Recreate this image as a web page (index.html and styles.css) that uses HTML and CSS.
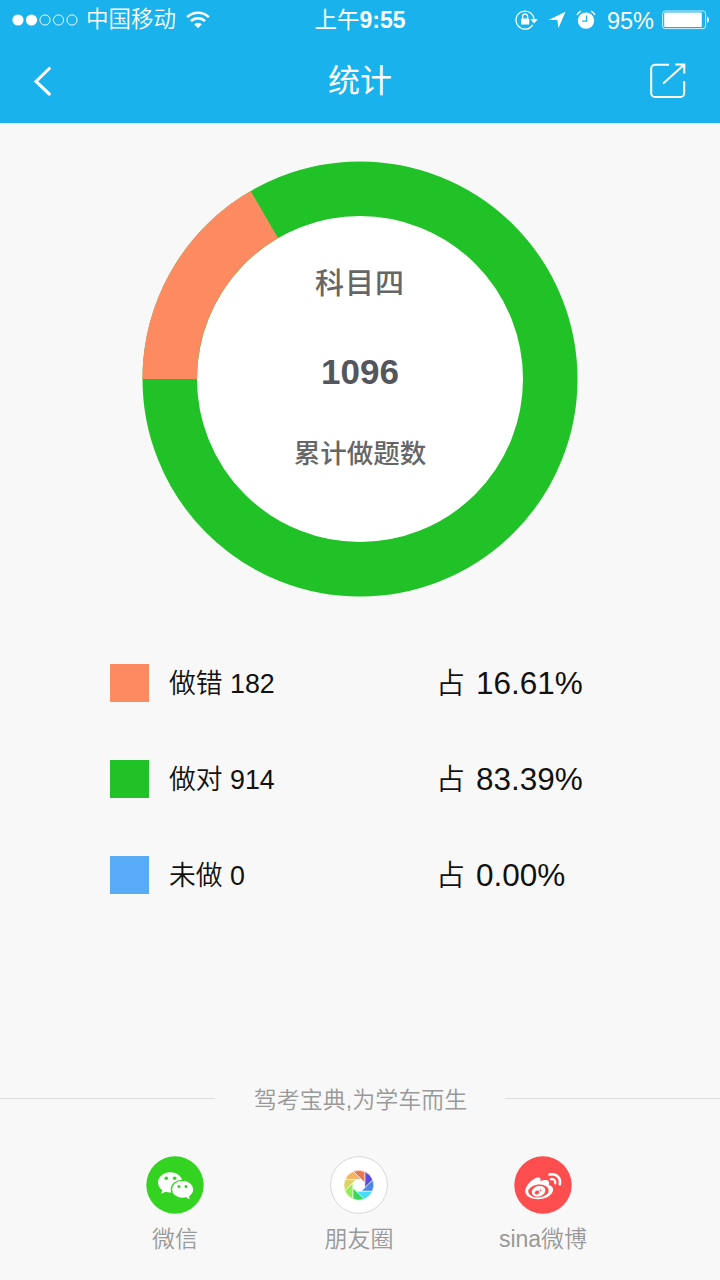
FILE: index.html
```
<!DOCTYPE html>
<html lang="zh-CN">
<head>
    <meta charset="UTF-8">
    <meta name="viewport" content="width=device-width, initial-scale=1.0">
    <title>统计</title>
    <link rel="stylesheet" href="styles.css">
</head>
<body>
    <header class="header">
        <div class="status-bar">
            <div class="status-left">
                <svg class="signal" width="66" height="12" viewBox="0 0 66 12">
                    <g fill="#fff">
                        <circle cx="6" cy="6" r="5.6"/>
                        <circle cx="19.5" cy="6" r="5.6"/>
                    </g>
                    <g fill="none" stroke="#fff" stroke-width="0.9">
                        <circle cx="33" cy="6" r="5.1"/>
                        <circle cx="46.5" cy="6" r="5.1"/>
                        <circle cx="60" cy="6" r="5.1"/>
                    </g>
                </svg>
                <span class="carrier">中国移动</span>
                <svg class="wifi" width="24" height="18" viewBox="0 0 24 18">
                    <g fill="none" stroke="#fff" stroke-width="2.5">
                        <path d="M1.2 6.1a15.4 15.4 0 0 1 21.6 0"/>
                        <path d="M5 10.2a10 10 0 0 1 14 0"/>
                    </g>
                    <path d="M8.2 13.3a5.4 5.4 0 0 1 7.6 0L12 17.2z" fill="#fff"/>
                </svg>
            </div>
            <div class="status-time">上午<b>9:55</b></div>
            <div class="status-right">
                <svg class="lock" width="24" height="20" viewBox="0 0 24 20">
                    <path d="M17.7 14.8A9 9 0 1 1 19 9.6" fill="none" stroke="#fff" stroke-width="1.3"/>
                    <path d="M15.4 9.2h7.4l-3.7 4.2z" fill="#fff"/>
                    <rect x="6" y="8.6" width="8.2" height="6" rx="0.6" fill="#fff"/>
                    <path d="M7.6 9V6.5a2.5 2.5 0 0 1 5 0V9" fill="none" stroke="#fff" stroke-width="1.3"/>
                </svg>
                <svg class="arrow" width="18" height="18" viewBox="0 0 18 18">
                    <path d="M17.5 0.8L10.4 17.3L9.4 8.9H0.5z" fill="#fff"/>
                </svg>
                <svg class="alarm" width="20" height="20" viewBox="0 0 20 20">
                    <circle cx="10" cy="10.6" r="8.2" fill="#fff"/>
                    <path d="M1 5a8 8 0 0 1 4-3.9M19 5a8 8 0 0 0-4-3.9" fill="none" stroke="#fff" stroke-width="1.4"/>
                    <path d="M10.6 5.4v5.8H6.2" fill="none" stroke="#19b2ed" stroke-width="1.2"/>
                </svg>
                <span class="battery-text">95%</span>
                <svg class="battery" width="48" height="20" viewBox="0 0 48 20">
                    <rect x="0.6" y="1" width="43" height="17.6" rx="2.6" fill="none" stroke="#fff" stroke-opacity="0.8" stroke-width="1"/>
                    <rect x="2.2" y="2.6" width="37.6" height="14.4" rx="1" fill="#fff"/>
                    <path d="M45 6.6c2.6 0.8 2.6 5.6 0 6.4z" fill="#fff"/>
                </svg>
            </div>
        </div>
        <nav class="nav">
            <svg class="back" width="20" height="30" viewBox="0 0 20 30">
                <path d="M16.3 2.5L3 15.5L16.3 28" fill="none" stroke="#fff" stroke-width="3.1" stroke-linecap="round"/>
            </svg>
            <h1 class="title">统计</h1>
            <svg class="share" width="36" height="36" viewBox="0 0 36 36">
                <g fill="none" stroke="#fff" stroke-width="2">
                    <path d="M19 1.8H5A3.8 3.8 0 0 0 1.2 5.6V30.2A3.8 3.8 0 0 0 5 34H30.4A3.8 3.8 0 0 0 34.2 30.2V18"/>
                    <path d="M13.2 20.6L33.8 2M25.2 1.6H34.3V10.6"/>
                </g>
            </svg>
        </nav>
    </header>

    <main class="content">
        <div class="chart">
            <svg class="ring" width="436" height="436" viewBox="0 0 436 436">
                <circle cx="218" cy="218" r="164" fill="#fff"/>
                <g fill="none" stroke-width="54.5">
                    <circle cx="218" cy="218" r="190.25" stroke="#20c227"/>
                    <circle cx="218" cy="218" r="190.25" stroke="#fe8a61" pathLength="100" stroke-dasharray="16.61 83.39" transform="rotate(180 218 218)"/>
                </g>
            </svg>
            <div class="chart-info">
                <div class="subject">科目四</div>
                <div class="total">1096</div>
                <div class="total-label">累计做题数</div>
            </div>
        </div>

        <ul class="legend">
            <li class="legend-row">
                <span class="swatch wrong"></span>
                <span class="legend-name">做错 182</span>
                <span class="legend-rate"><i>占</i>16.61%</span>
            </li>
            <li class="legend-row">
                <span class="swatch right"></span>
                <span class="legend-name">做对 914</span>
                <span class="legend-rate"><i>占</i>83.39%</span>
            </li>
            <li class="legend-row">
                <span class="swatch undone"></span>
                <span class="legend-name">未做 0</span>
                <span class="legend-rate"><i>占</i>0.00%</span>
            </li>
        </ul>
    </main>

    <footer class="footer">
        <div class="slogan"><span>驾考宝典,为学车而生</span></div>
        <div class="share-list">
            <div class="share-item">
                <svg width="58" height="58" viewBox="0 0 58 58">
                    <circle cx="29" cy="29" r="28.7" fill="#35d321"/>
                    <path d="M24.3 16.2c-6.8 0-12.2 4.5-12.2 10.2 0 3.1 1.6 5.8 4.2 7.7l-1 3.6 4.3-2c1.5.5 3 .8 4.7.8 6.8 0 12.3-4.5 12.3-10.1s-5.5-10.2-12.3-10.2z" fill="#fff"/>
                    <path d="M36.3 24.3c-6.2 0-10.9 4-10.9 9 0 5.1 4.7 9.1 10.9 9.1 1.3 0 2.6-.2 3.7-.5l4.6 2.6-.8-4c2.6-1.7 4-4.3 4-7.2 0-5-4.700-9-11.500-9z" fill="#fff" stroke="#35d321" stroke-width="1.3"/>
                    <g fill="#35d321">
                        <circle cx="20.3" cy="22.2" r="1.8"/>
                        <circle cx="28.6" cy="22.2" r="1.8"/>
                        <circle cx="32.9" cy="30.6" r="1.5"/>
                        <circle cx="40" cy="30.6" r="1.5"/>
                    </g>
                </svg>
                <span>微信</span>
            </div>
            <div class="share-item">
                <svg width="58" height="58" viewBox="0 0 58 58">
                    <defs>
                        <path id="blade" d="M6-13.7V2.5L13.9-5.4A15 15 0 0 0 6-13.7z"/>
                    </defs>
                    <circle cx="29" cy="29" r="28.4" fill="#fff" stroke="#d2d2d2" stroke-width="0.9"/>
                    <g transform="translate(28.8 29.3)" stroke="#fff" stroke-width="0.6">
                        <use href="#blade" fill="#584be3"/>
                        <use href="#blade" fill="#4d87e6" transform="rotate(45)"/>
                        <use href="#blade" fill="#48dcf8" transform="rotate(90)"/>
                        <use href="#blade" fill="#3bd660" transform="rotate(135)"/>
                        <use href="#blade" fill="#91ef55" transform="rotate(180)"/>
                        <use href="#blade" fill="#dcd269" transform="rotate(225)"/>
                        <use href="#blade" fill="#f5b25f" transform="rotate(270)"/>
                        <use href="#blade" fill="#ec7650" transform="rotate(315)"/>
                    </g>
                </svg>
                <span>朋友圈</span>
            </div>
            <div class="share-item">
                <svg width="58" height="58" viewBox="0 0 58 58">
                    <circle cx="29" cy="29" r="28.7" fill="#fd4d4f"/>
                    <path d="M25 21.5c1.8.4 1.9 2 1.3 3.7 3.6-1.5 7.9-1.9 8.7 1 .3 1-.1 2-.3 2.8 3.3.8 4.8 2.6 4.4 5.2-.8 5-7.6 9-15 9-6.9 0-12.9-3-12.9-8.2 0-5.5 8.7-14.5 13.8-13.5z" fill="#fff"/>
                    <ellipse cx="24.5" cy="35" rx="10.3" ry="6.5" transform="rotate(-6 24.5 35)" fill="#fd4d4f"/>
                    <ellipse cx="24.6" cy="35.3" rx="7" ry="5.2" transform="rotate(-18 24.6 35.3)" fill="#fff"/>
                    <ellipse cx="23" cy="36.5" rx="2.4" ry="1.8" transform="rotate(-25 23 36.5)" fill="#fd4d4f"/>
                    <circle cx="26.6" cy="34.3" r="0.9" fill="#fd4d4f"/>
                    <g fill="none" stroke="#fff" stroke-linecap="round">
                        <path d="M35.6 18.6c6.2-1.7 11.6 3.1 10.2 9.6" stroke-width="2.6"/>
                        <path d="M36.8 23.2c3-.7 5.1 1.3 4.4 4.2" stroke-width="2.2"/>
                    </g>
                </svg>
                <span>sina微博</span>
            </div>
        </div>
    </footer>
</body>
</html>
```

FILE: styles.css
```
* {
    box-sizing: border-box;
}

body {
    margin: 0;
    padding: 0;
    height: 1280px;
    display: flex;
    flex-direction: column;
    background-color: #f8f8f8;
    font-family: "Liberation Sans", "Noto Sans CJK SC", sans-serif;
    color: #111;
    overflow: hidden;
}

svg {
    display: block;
    flex-shrink: 0;
}

.header {
    height: 123px;
    background-color: #19b2ed;
    color: #fff;
}

.status-bar {
    height: 40px;
    padding: 0 10px 0 12px;
    display: grid;
    grid-template-columns: 1fr auto 1fr;
    align-items: center;
    font-size: 22.5px;
    line-height: 38px;
}

.status-left,
.status-right {
    display: flex;
    align-items: center;
}

.carrier {
    margin: 0 10px 0 8px;
    font-weight: 350;
}

.status-time {
    padding-right: 2px;
    font-weight: 400;
}

.status-time b {
    font-size: 23px;
}

.status-right {
    justify-content: flex-end;
}

.arrow {
    margin: 0 10px 0 9px;
}

.battery-text {
    margin: 0 8px 0 11px;
    padding-top: 2px;
    font-size: 23.5px;
}

.nav {
    height: 83px;
    padding: 0 34px 2px 33px;
    display: grid;
    grid-template-columns: 1fr auto 1fr;
    align-items: center;
}

.share {
    justify-self: end;
}

.title {
    margin: 0;
    padding: 0 0 0 1px;
    font-size: 32px;
    font-weight: 400;
    line-height: 80px;
}

.content {
    flex: 1;
    padding-top: 38px;
}

.chart {
    width: 436px;
    height: 436px;
    margin: 0 auto;
    display: grid;
}

.ring,
.chart-info {
    grid-area: 1 / 1;
}

.chart-info {
    padding-top: 102px;
    text-align: center;
    color: #666;
    font-weight: 500;
}

.subject {
    font-size: 29px;
    letter-spacing: 1px;
    line-height: 42px;
}

.total {
    margin-top: 46px;
    font-size: 35px;
    font-weight: bold;
    line-height: 42px;
    color: #53565c;
}

.total-label {
    margin-top: 40px;
    font-size: 26.5px;
    line-height: 42px;
}

.legend {
    list-style: none;
    margin: 67px 0 0;
    padding: 0 0 0 110px;
}

.legend-row {
    height: 38px;
    margin-bottom: 58px;
    display: grid;
    grid-template-columns: 39px 287px 1fr;
    align-items: center;
    line-height: 36px;
}

.swatch {
    height: 38px;
}

.wrong {
    background-color: #fe8a61;
}

.right {
    background-color: #20c227;
}

.undone {
    background-color: #58abf6;
}

.legend-name {
    padding: 1px 0 0 20px;
    font-size: 26.8px;
    font-weight: 350;
}

.legend-rate {
    display: flex;
    gap: 11px;
    font-size: 31.5px;
}

.legend-rate i {
    padding-top: 1px;
    font-size: 29px;
    font-style: normal;
    font-weight: 350;
}

.footer {
    height: 201px;
    color: #999;
    font-size: 23px;
    font-weight: 350;
}

.slogan {
    height: 38px;
    display: flex;
    align-items: center;
    justify-content: space-between;
    line-height: 36px;
}

.slogan span {
    padding: 3px 0 0 1px;
}

.slogan::before,
.slogan::after {
    content: "";
    width: 215px;
    height: 1px;
    background-color: #dcdcdc;
}

.share-list {
    padding: 39px 85px 0 83px;
    display: grid;
    grid-template-columns: repeat(3, 1fr);
}

.share-item {
    display: flex;
    flex-direction: column;
    align-items: center;
    gap: 8px;
    line-height: 34px;
}
```
